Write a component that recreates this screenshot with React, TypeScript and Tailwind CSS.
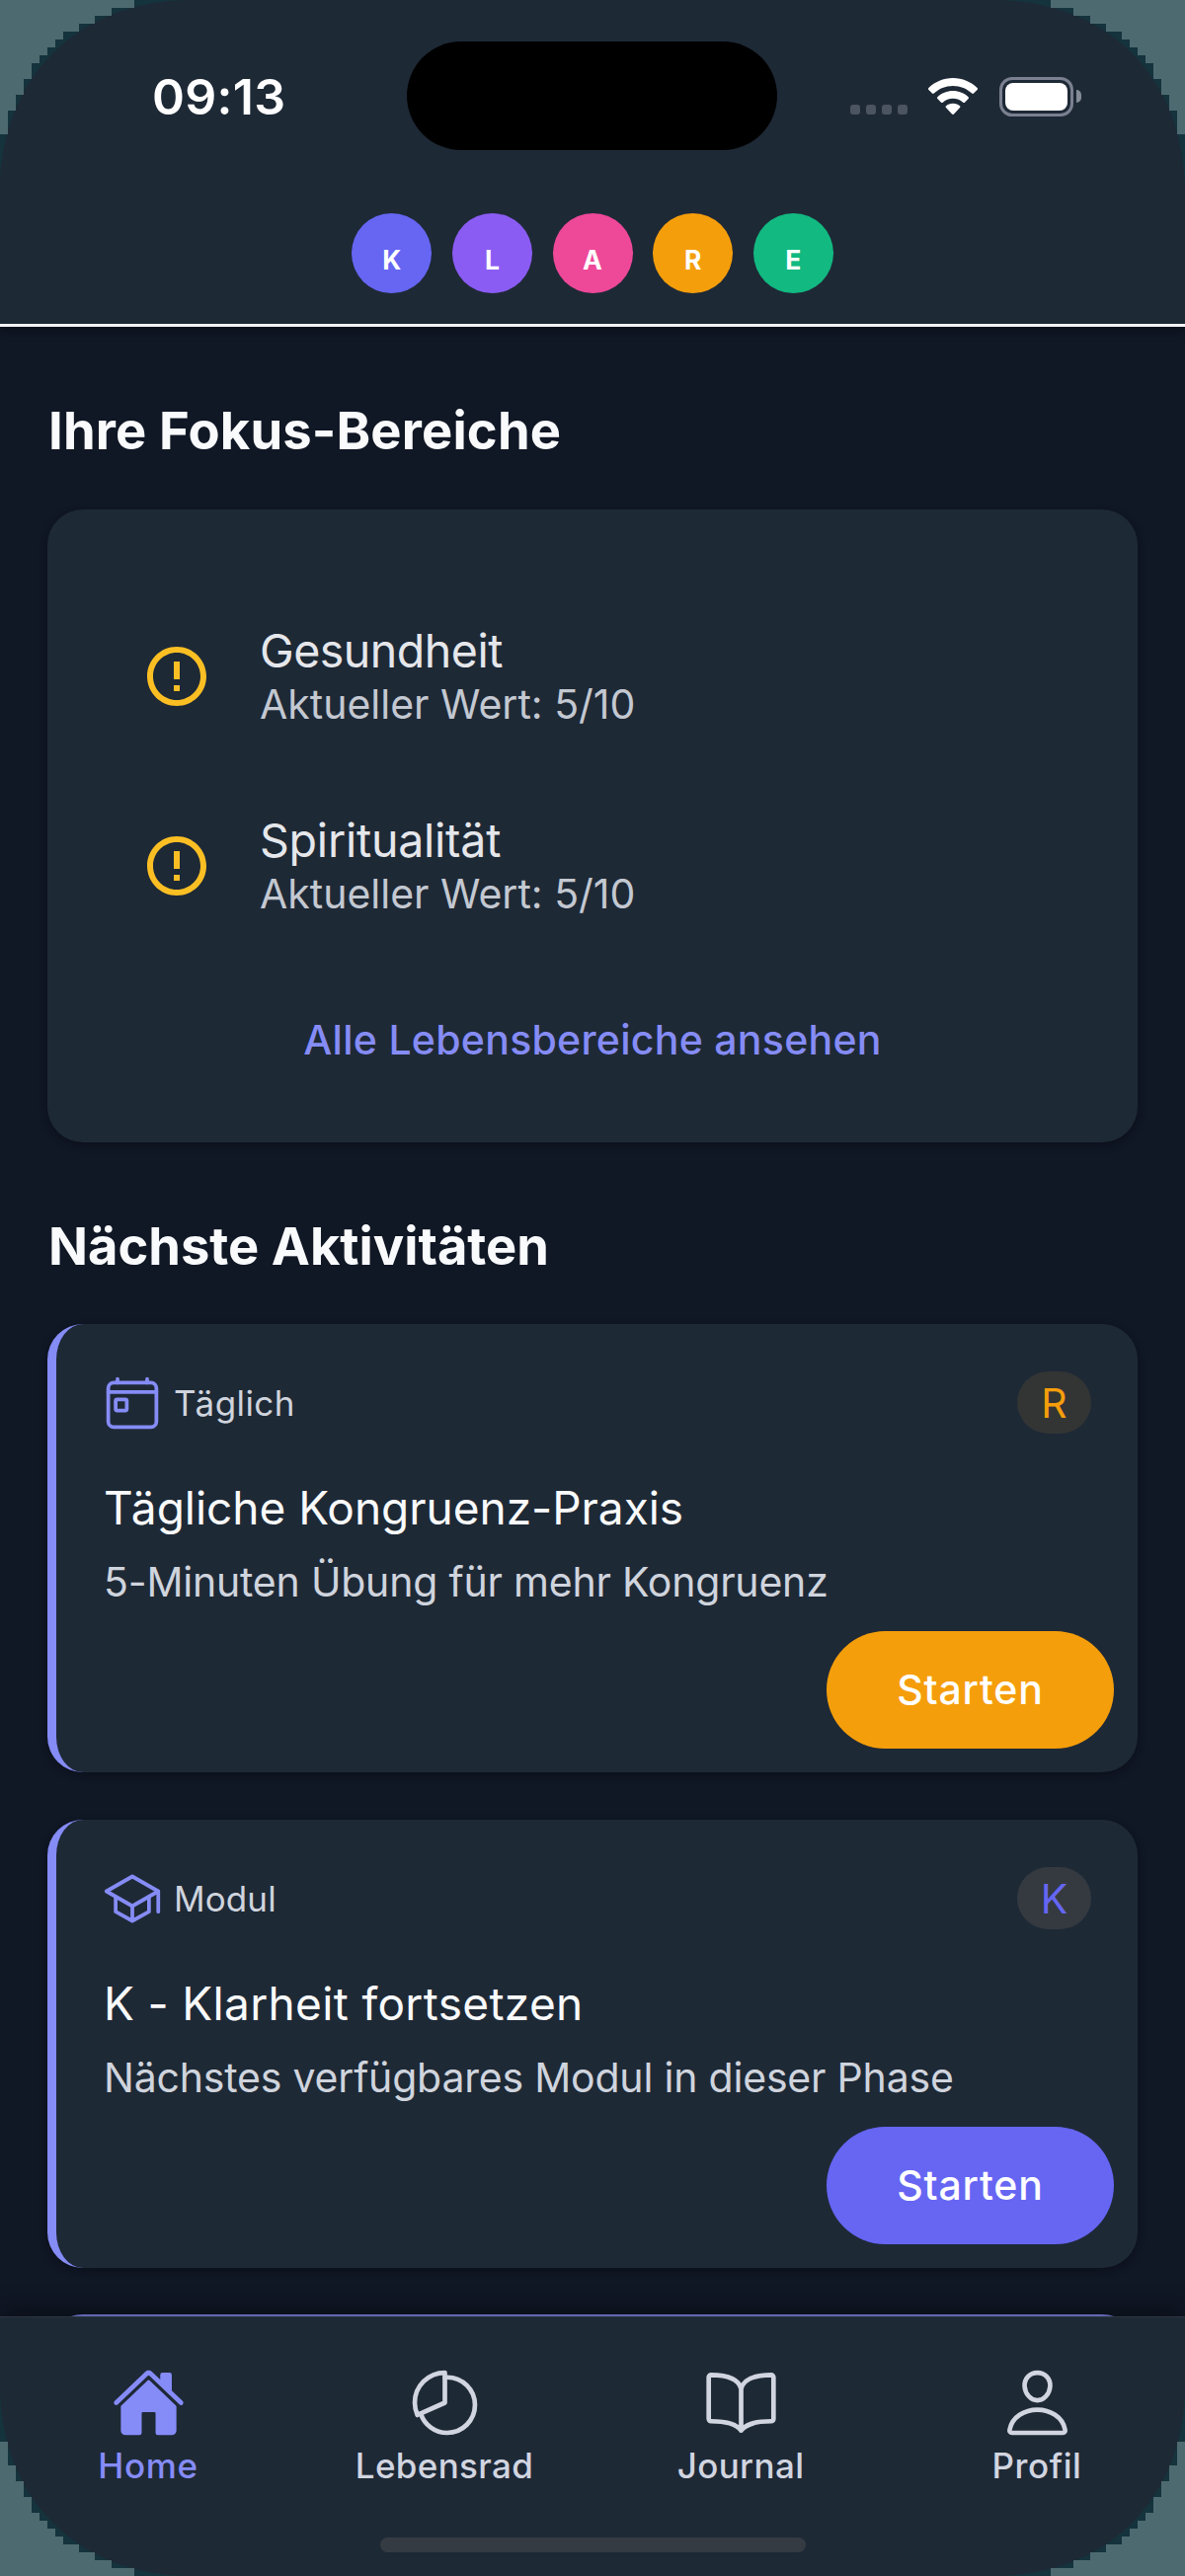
import React from "react";
import { MdErrorOutline } from "react-icons/md";
import {
  IoBookOutline,
  IoHome,
  IoPersonOutline,
  IoPieChartOutline,
  IoSchoolOutline,
  IoTodayOutline,
} from "react-icons/io5";

function Corner({ className }: { className: string }) {
  return (
    <svg viewBox="0 0 200 200" className={`pointer-events-none absolute z-20 size-[200px] ${className}`}>
      <path d="M0 0H190C78 2 2 78 0 190Z" fill="#15333c" />
      <path
        d="M0 0H136V8H113V16H96V24H80V32H64V40H56V48H48V56H40V64H32V80H24V96H16V112H8V136H0Z"
        fill="#4e6a71"
      />
    </svg>
  );
}

function Wifi() {
  return (
    <svg viewBox="0 0 50 38" className="ml-[21px] h-[38px] w-[50px]" fill="#fff">
      <path d="M25 0C34.6 0 43.3 3.8 49.6 10.1C50.2 10.7 50.2 11.3 49.6 11.9L46 15.6C45.5 16.1 44.8 16.1 44.2 15.6C39.200 10.8 32.500 8 25 8S10.800 10.800 5.800 15.600C5.200 16.100 4.500 16.100 4 15.600L.4 11.900C-.2 11.300-.2 10.700.4 10.100C6.700 3.800 15.400 0 25 0Z" />
      <path d="M25 13C31 13 36.500 15.300 40.600 19.200C41.200 19.800 41.200 20.400 40.600 21L37 24.700C36.400 25.200 35.800 25.200 35.200 24.700C32.500 22.200 29 20.700 25 20.700S17.500 22.200 14.800 24.700C14.200 25.200 13.600 25.200 13 24.700L9.400 21C8.800 20.400 8.800 19.800 9.400 19.200C13.500 15.300 19 13 25 13Z" />
      <path d="M25 25.800C28 25.800 30.300 26.700 32 28.200C32.600 28.700 32.600 29.300 32 29.900L26 36.600C25.400 37.200 24.600 37.200 24 36.600L18 29.900C17.400 29.300 17.400 28.700 18 28.200C19.700 26.700 22 25.800 25 25.800Z" />
    </svg>
  );
}

function Battery() {
  return (
    <div className="ml-[22px] flex items-center">
      <div className="h-[40px] w-[75px] rounded-[13px] border-[3px] border-[#7a8090] p-[3px]">
        <div className="h-full w-full rounded-[8px] bg-white" />
      </div>
      <div className="ml-[3px] h-[13px] w-[5px] rounded-r-full bg-[#858b98]" />
    </div>
  );
}

const phases = [
  { letter: "K", color: "bg-[#6666f3]" },
  { letter: "L", color: "bg-[#8b5cf4]" },
  { letter: "A", color: "bg-[#ee4899]" },
  { letter: "R", color: "bg-[#f59e0b]" },
  { letter: "E", color: "bg-[#12b981]" },
];

function Header() {
  return (
    <header className="relative z-10 h-[331px] shrink-0 border-b-[3px] border-[#f3f4f8] bg-[#1e2936] shadow-[0_3px_10px_rgba(0,0,0,0.35)]">
      <div className="flex h-[193px] items-center">
        <div className="w-[412px] pt-[2px] pl-[154px] text-[50px] leading-[60px] font-semibold tracking-[0.31px] text-white">
          09:13
        </div>
        <div className="h-[110px] w-[375px] rounded-full bg-black" />
        <div className="ml-[74px] flex items-center pt-[2px]">
          <div className="mt-[26px] flex gap-[6px]">
            {[0, 1, 2, 3].map((i) => (
              <div key={i} className="size-[10px] rounded-[3px] bg-[#4b5460]" />
            ))}
          </div>
          <Wifi />
          <Battery />
        </div>
      </div>
      <div className="mt-[23px] flex justify-center gap-[20.6px]">
        {phases.map((p) => (
          <div
            key={p.letter}
            className={`flex size-[81px] items-center justify-center rounded-full pt-[13px] text-[26.5px] leading-[32px] font-bold text-white ${p.color}`}
          >
            {p.letter}
          </div>
        ))}
      </div>
    </header>
  );
}

function FocusRow({ name, tracking }: { name: string; tracking: string }) {
  return (
    <div className="flex h-[192px] items-center gap-[48px] pl-[95px]">
      <MdErrorOutline className="mt-[1px] size-[72px] text-[#fbbf24]" />
      <div>
        <div className={`text-[46.5px] leading-[58px] text-[#e5e7eb] ${tracking}`}>{name}</div>
        <div className="text-[41px] leading-[50px] text-[#c3c8d1]">Aktueller Wert: 5/10</div>
      </div>
    </div>
  );
}

type Activity = {
  icon: React.ComponentType<{ className?: string }>;
  kind: string;
  kindTracking: string;
  phase: string;
  title: string;
  titleTracking: string;
  description: string;
  badge: string;
  button: string;
};

const activities: Activity[] = [
  {
    icon: IoTodayOutline,
    kind: "Täglich",
    kindTracking: "tracking-[0.4px]",
    phase: "R",
    title: "Tägliche Kongruenz-Praxis",
    titleTracking: "tracking-[-0.02px]",
    description: "5-Minuten Übung für mehr Kongruenz",
    badge: "bg-[#333535] text-[#f59e0b]",
    button: "bg-[#f59e0b]",
  },
  {
    icon: IoSchoolOutline,
    kind: "Modul",
    kindTracking: "tracking-[0.1px]",
    phase: "K",
    title: "K - Klarheit fortsetzen",
    titleTracking: "tracking-[0.34px]",
    description: "Nächstes verfügbares Modul in dieser Phase",
    badge: "bg-[#343a40] text-[#6666f3]",
    button: "bg-[#6666f3]",
  },
];

function ActivityCard({ activity }: { activity: Activity }) {
  const Icon = activity.icon;
  return (
    <article className="flex h-[454px] flex-col rounded-[36px] border-l-[9px] border-[#858cf5] bg-[#1e2936] pt-[48px] pl-[48px] shadow-[0_3px_9px_rgba(0,0,0,0.3)]">
      <div className="flex h-[63px] items-center pr-[47px]">
        <Icon className="-ml-[1px] size-[60px] text-[#858cf5]" />
        <span
          className={`ml-[12px] text-[35px] leading-[44px] text-[#cfd4dd] ${activity.kindTracking}`}
        >
          {activity.kind}
        </span>
        <span
          className={`ml-auto flex h-[63px] w-[75px] items-center justify-center rounded-full text-[41px] leading-[50px] ${activity.badge}`}
        >
          {activity.phase}
        </span>
      </div>
      <h3 className={`mt-[45px] text-[46px] leading-[60px] text-[#f9fafb] ${activity.titleTracking}`}>
        {activity.title}
      </h3>
      <p className="mt-[17px] text-[41px] leading-[56px] tracking-[-0.2px] whitespace-nowrap text-[#cfd4dd]">
        {activity.description}
      </p>
      <button
        className={`mt-[22px] mr-[24px] h-[119px] w-[291px] self-end rounded-full pb-[1px] text-[41px] leading-[50px] font-medium tracking-[0.8px] text-white ${activity.button}`}
      >
        Starten
      </button>
    </article>
  );
}

const tabs = [
  { label: "Home", icon: IoHome, color: "text-[#858cf8]", tracking: "tracking-[0.7px]" },
  { label: "Lebensrad", icon: IoPieChartOutline, color: "text-[#d1d5e0]", tracking: "tracking-[0.35px]" },
  { label: "Journal", icon: IoBookOutline, color: "text-[#d1d5e0]", tracking: "tracking-[0.38px]" },
  { label: "Profil", icon: IoPersonOutline, color: "text-[#d1d5e0]", tracking: "tracking-[0.57px]" },
];

function TabBar() {
  return (
    <nav className="relative z-10 h-[263px] shrink-0 border-t border-[#2c3641] bg-[#1e2936] shadow-[0_-6px_24px_rgba(0,0,0,0.4)]">
      <div className="grid grid-cols-4 pt-[49px]">
        {tabs.map((t) => (
          <div key={t.label} className={`flex flex-col items-center ${t.color}`}>
            <t.icon className="size-[75px]" />
            <span className={`mt-[4px] text-[35px] leading-[44px] font-medium ${t.tracking}`}>{t.label}</span>
          </div>
        ))}
      </div>
      <div className="mx-auto mt-[51px] h-[15px] w-[431px] rounded-full bg-[#353b43]" />
    </nav>
  );
}

export default function App() {
  return (
    <div className="relative flex h-[2609px] w-[1200px] flex-col overflow-hidden bg-[#101725] font-['Inter','Liberation_Sans',sans-serif]">
      <Header />
      <main className="min-h-0 flex-1 overflow-hidden px-[48px] pt-[73px]">
        <h2 className="pl-[1px] text-[52.5px] leading-[64px] font-bold tracking-[0.15px] text-[#f9fafb]">
          Ihre Fokus-Bereiche
        </h2>
        <section className="mt-[48px] h-[641px] rounded-[36px] bg-[#1e2936] pt-[72px] shadow-[0_3px_9px_rgba(0,0,0,0.3)]">
          <FocusRow name="Gesundheit" tracking="tracking-[-0.5px]" />
          <FocusRow name="Spiritualität" tracking="tracking-[-0.23px]" />
          <div className="mt-[51px] text-center text-[41px] leading-[60px] font-medium tracking-[0.28px] text-[#858cf5]">
            Alle Lebensbereiche ansehen
          </div>
        </section>
        <h2 className="mt-[73px] pl-[1px] text-[52.5px] leading-[64px] font-bold tracking-[-0.02px] text-[#f9fafb]">
          Nächste Aktivitäten
        </h2>
        <div className="mt-[47px] flex flex-col gap-[48px]">
          {activities.map((a) => (
            <ActivityCard key={a.title} activity={a} />
          ))}
          <div className="-mt-[1px] h-[454px] shrink-0 rounded-[36px] border-[3px] border-[#858cf5] bg-[#1e2936]" />
        </div>
      </main>
      <TabBar />
      <Corner className="top-0 left-0" />
      <Corner className="top-0 right-0 -scale-x-100" />
      <Corner className="bottom-0 left-0 -scale-y-100" />
      <Corner className="right-0 bottom-0 -scale-100" />
    </div>
  );
}
